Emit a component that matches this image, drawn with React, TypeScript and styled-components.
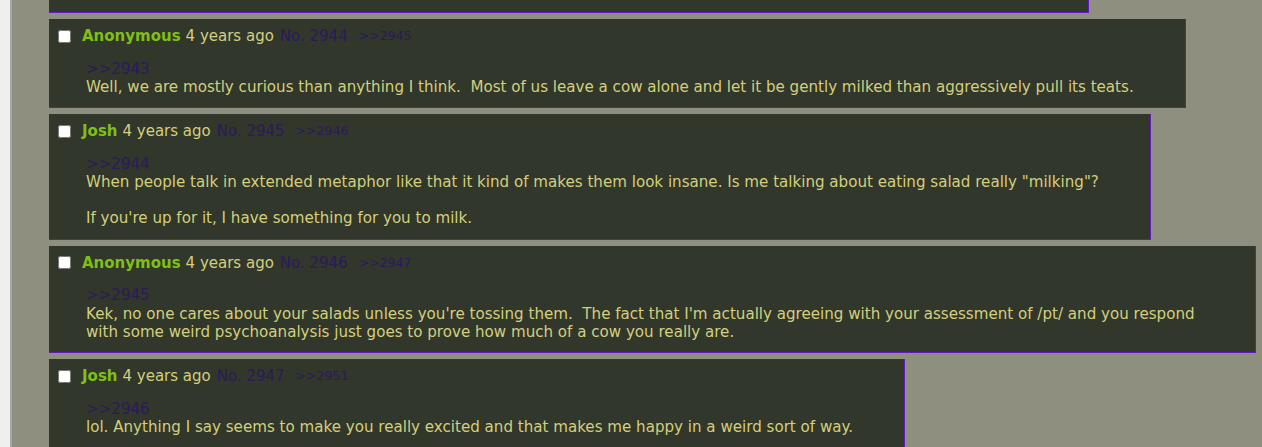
import React from "react";
import styled, { createGlobalStyle } from "styled-components";

const Global = createGlobalStyle`
  html, body { margin: 0; padding: 0; background: #efefef; }
  body { font-family: "DejaVu Sans", Verdana, sans-serif; font-size: 15px; }
`;

const Page = styled.div`
  display: flex;
  min-height: 447px;
`;

const Gutter = styled.div`
  width: 10px;
  flex: none;
  background: #efefef;
`;

const Board = styled.main`
  flex: 1;
  background: #8f8f80;
  border-left: 2px solid #a6a6a6;
  padding: 0 6px 0 37px;
  overflow: hidden;
`;

const Post = styled.article<{ $stub?: boolean }>`
  max-width: 100%;
  box-sizing: border-box;
  background: #31372a;
  border-right: 1px solid #6418c8;
  border-bottom: 1px solid #6418c8;
  margin-bottom: 6px;
  padding: ${(p) => (p.$stub ? "0" : "8px 51px 11px 5px")};
  height: ${(p) => (p.$stub ? "13px" : "auto")};
  width: ${(p) => (p.$stub ? "1040px" : "fit-content")};
  color: #d4cf7e;
  line-height: 18px;
`;

const Header = styled.div`
  display: flex;
  align-items: center;
  height: 18px;
  white-space: nowrap;
`;

const Check = styled.input`
  width: 13px;
  height: 13px;
  margin: 0 11px 0 4px;
`;

const Name = styled.span`
  color: #7fbf17;
  font-weight: bold;
  margin-right: 5px;
`;

const Time = styled.span`
  margin-right: 6px;
`;

const Num = styled.span`
  color: #2b1a5c;
  margin-right: 11px;
`;

const Reply = styled.span`
  color: #2b1a5c;
  font-size: 12.5px;
`;

const Body = styled.div`
  margin-top: 14.5px;
  padding-left: 32px;
  font-size: 15.1px;
  line-height: 18.3px;
  white-space: pre-wrap;
`;

const Quote = styled.div`
  color: #2b1a5c;
`;

type P = { name: string; no: number; reply: number; quote: number; text: string };

const posts: P[] = [
  {
    name: "Anonymous",
    no: 2944,
    reply: 2945,
    quote: 2943,
    text: "Well, we are mostly curious than anything I think.  Most of us leave a cow alone and let it be gently milked than aggressively pull its teats.",
  },
  {
    name: "Josh",
    no: 2945,
    reply: 2946,
    quote: 2944,
    text: 'When people talk in extended metaphor like that it kind of makes them look insane. Is me talking about eating salad really "milking"?\n\nIf you\'re up for it, I have something for you to milk.',
  },
  {
    name: "Anonymous",
    no: 2946,
    reply: 2947,
    quote: 2945,
    text: "Kek, no one cares about your salads unless you're tossing them.  The fact that I'm actually agreeing with your assessment of /pt/ and you respond with some weird psychoanalysis just goes to prove how much of a cow you really are.",
  },
  {
    name: "Josh",
    no: 2947,
    reply: 2951,
    quote: 2946,
    text: "lol. Anything I say seems to make you really excited and that makes me happy in a weird sort of way.",
  },
];

export default function App() {
  return (
    <>
      <Global />
      <Page>
        <Gutter />
        <Board>
          <Post $stub />
          {posts.map((p) => (
            <Post key={p.no}>
              <Header>
                <Check type="checkbox" />
                <Name>{p.name}</Name>
                <Time>4 years ago</Time>
                <Num>No. {p.no}</Num>
                <Reply>&gt;&gt;{p.reply}</Reply>
              </Header>
              <Body>
                <Quote>&gt;&gt;{p.quote}</Quote>
                {p.text}
              </Body>
            </Post>
          ))}
        </Board>
      </Page>
    </>
  );
}
